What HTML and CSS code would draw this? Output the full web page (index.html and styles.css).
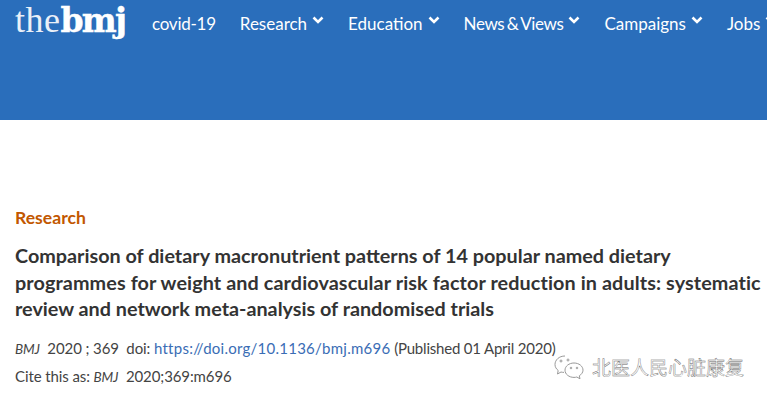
FILE: index.html
```html
<!DOCTYPE html>
<html lang="en">
<head>
    <meta charset="UTF-8">
    <meta name="viewport" content="width=device-width, initial-scale=1.0">
    <title>Comparison of dietary macronutrient patterns</title>
    <link rel="stylesheet" href="styles.css">
</head>
<body>
    <header class="site-header">
        <a class="logo" href="#"><span class="logo-the">the</span><span class="logo-bmj">bmj</span></a>
        <nav class="main-nav">
            <a class="nav-covid" href="#">covid-19</a>
            <a href="#">Research<svg class="chev" viewBox="0 0 12 8"><path d="M1.500 1.500 6 6l4.500-4.500"/></svg></a>
            <a href="#">Education<svg class="chev" viewBox="0 0 12 8"><path d="M1.500 1.500 6 6l4.500-4.500"/></svg></a>
            <a class="nav-news" href="#">News &amp; Views<svg class="chev" viewBox="0 0 12 8"><path d="M1.500 1.500 6 6l4.500-4.500"/></svg></a>
            <a href="#">Campaigns<svg class="chev" viewBox="0 0 12 8"><path d="M1.500 1.500 6 6l4.500-4.500"/></svg></a>
            <a href="#">Jobs<svg class="chev" viewBox="0 0 12 8"><path d="M1.500 1.500 6 6l4.500-4.500"/></svg></a>
        </nav>
    </header>

    <main class="article">
        <div class="section-label">Research</div>
        <h1 class="article-title">Comparison of dietary macronutrient patterns of 14 popular named dietary <span class="title-wide">programmes for weight and cardiovascular risk factor reduction in adults: systematic</span> review and network meta-analysis of randomised trials</h1>
        <p class="meta"><em>BMJ</em>&nbsp; 2020 ; 369&nbsp; doi: <a href="#">https://doi.org/10.1136/bmj.m696</a> <span class="published">(Published 01 April 2020)</span></p>
        <p class="meta">Cite this as: <em>BMJ</em>&nbsp; 2020;369:m696</p>
    </main>

    <!-- wechat watermark over the page -->
    <div class="watermark">
        <svg class="wm-icon" viewBox="0 0 32 26">
            <path d="M12 2C6 2 2 6 2 10.500c0 2.500 1.300 4.500 3.200 6L4.500 20l3.500-2c1 .3 2 .4 3 .4"/>
            <path d="M21 9c-5 0-9 3.200-9 7.200s4 7.200 9 7.200c1 0 2-.1 2.800-.4l3.200 1.800-.7-3c2-1.300 3.700-3.300 3.700-5.600C30 12.200 26 9 21 9z"/>
            <circle cx="8" cy="7" r="1"/><circle cx="15" cy="6" r="1"/><circle cx="18" cy="14" r=".8"/><circle cx="24" cy="14" r=".8"/>
        </svg>
        <span>北医人民心脏康复</span>
    </div>
</body>
</html>
```

FILE: styles.css
```css
body {
    margin: 0;
    background: #fff;
    font-family: Lato, "Open Sans", sans-serif;
    color: #333;
    overflow: hidden;
    height: 400px;
    position: relative;
}

.site-header {
    background-color: #2a6ebb;
    height: 120px;
    display: flex;
    align-items: flex-start;
    padding-left: 15px;
    white-space: nowrap;
    overflow: hidden;
}

.logo {
    color: #fff;
    text-decoration: none;
    font-size: 36px;
    line-height: 34px;
    padding-top: 1px;
    width: 137px;
    flex: none;
}

.logo-the {
    font-family: "Liberation Serif", serif;
    letter-spacing: 0.500px;
    opacity: .9;
}

.logo-bmj {
    font-family: "DejaVu Serif", serif;
    font-weight: bold;
    font-size: 33px;
    letter-spacing: -1.700px;
    -webkit-text-stroke: 0.500px #fff;
}

.main-nav {
    display: flex;
    gap: 24px;
    font-size: 17px;
    line-height: 24px;
    padding-top: 12px;
}

.main-nav a {
    color: #fff;
    text-decoration: none;
}

.main-nav .nav-covid {
    letter-spacing: -0.250px;
}

.main-nav .nav-news {
    word-spacing: -1.500px;
    letter-spacing: -0.400px;
}

.chev {
    width: 12px;
    height: 8px;
    vertical-align: 6px;
    margin-left: 5px;
    fill: none;
    stroke: #fff;
    stroke-width: 2.600;
}

.article {
    padding: 88px 0 0 15px;
}

.section-label {
    color: #c25700;
    font-size: 17.600px;
    font-weight: bold;
    line-height: 20px;
}

.article-title {
    margin: 14px 0 0;
    font-size: 19.800px;
    font-weight: bold;
    line-height: 26.500px;
    color: #333;
}

.title-wide {
    letter-spacing: 0.100px;
}

.meta {
    margin: 0;
    font-size: 15px;
    line-height: 27px;
    letter-spacing: -0.100px;
    color: #444;
}

.meta em {
    font-size: 13.500px;
}

.article-title + .meta {
    margin-top: 13px;
}

.meta a {
    color: #3a6db5;
    text-decoration: none;
    letter-spacing: 0.250px;
}

.published {
    letter-spacing: -0.200px;
}

.watermark {
    position: absolute;
    left: 553px;
    top: 354px;
    display: flex;
    align-items: center;
    gap: 7px;
    font-family: "Noto Sans CJK SC", sans-serif;
    font-size: 19px;
    line-height: 26px;
    color: #fff;
    -webkit-text-stroke: 0.400px #666;
}

.wm-icon {
    width: 32px;
    height: 26px;
    fill: none;
    stroke: #999;
    stroke-width: 1;
}
```
